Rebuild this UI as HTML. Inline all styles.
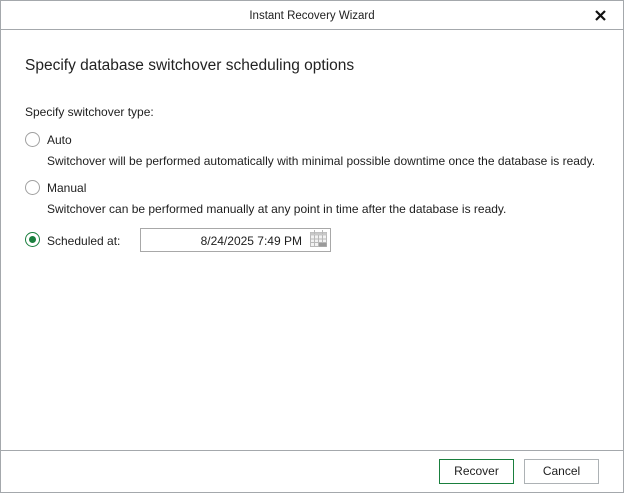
<!DOCTYPE html>
<html><head><meta charset="utf-8"><style>
*{margin:0;padding:0;box-sizing:border-box}
body{width:624px;height:493px;background:#fff;font-family:"Liberation Sans",sans-serif;color:#1e1e1e;position:relative;overflow:hidden}
.frame{position:absolute;left:0;top:0;width:624px;height:493px;border:1px solid #a4a8ac}
.abs{position:absolute;white-space:nowrap}
.line{position:absolute;left:0;width:624px;height:1px;background:#a4a8ac}
.radio{position:absolute;width:15px;height:15px;border:1px solid #a0a0a0;border-radius:50%;background:#fff}
.radio.on{border-color:#1a7f3e}
.radio.on::after{content:"";position:absolute;left:3px;top:3px;width:7px;height:7px;border-radius:50%;background:#1a7f3e}
.t{font-size:12px}
.btn{position:absolute;top:459px;height:25px;width:75px;border:1px solid #adb2b5;font-size:12px;text-align:center;line-height:23px;background:#fff}
</style></head><body>
<div class="frame"></div>
<div class="abs t" style="left:0;width:624px;text-align:center;top:10px;font-size:11.5px">Instant Recovery Wizard</div>
<svg class="abs" style="left:595px;top:10px" width="11" height="11" viewBox="0 0 11 11"><path d="M1 1L10 10M10 1L1 10" stroke="#111" stroke-width="2.2"/></svg>
<div class="line" style="top:29px"></div>
<div class="abs" style="left:25px;top:57px;font-size:15.5px;color:#222">Specify database switchover scheduling options</div>
<div class="abs t" style="left:25px;top:105px">Specify switchover type:</div>
<div class="radio" style="left:25px;top:132px"></div>
<div class="abs t" style="left:47px;top:133px">Auto</div>
<div class="abs t" style="left:47px;top:154px">Switchover will be performed automatically with minimal possible downtime once the database is ready.</div>
<div class="radio" style="left:25px;top:180px"></div>
<div class="abs t" style="left:47px;top:181px">Manual</div>
<div class="abs t" style="left:47px;top:202px">Switchover can be performed manually at any point in time after the database is ready.</div>
<div class="radio on" style="left:25px;top:232px"></div>
<div class="abs t" style="left:47px;top:234px">Scheduled at:</div>
<div class="abs" style="left:140px;top:228px;width:191px;height:24px;border:1px solid #a8a8a8"></div>
<div class="abs t" style="left:140px;width:162px;text-align:right;top:234px">8/24/2025 7:49 PM</div>
<svg class="abs" style="left:310px;top:230px" width="17" height="17" viewBox="0 0 17 17"><rect x="0.5" y="2.5" width="16" height="14" fill="#f2f2f2" stroke="#b8b8b8"/><rect x="0.5" y="2.5" width="16" height="3" fill="#c8c8c8"/><path d="M4.5 0v4M12.5 0v4M0.5 9h16M0.5 12.5h16M4.5 5v11M8.5 5v11M12.5 5v11" stroke="#b8b8b8"/><rect x="9" y="13" width="7.5" height="3.5" fill="#9a9a9a"/></svg>
<div class="line" style="top:450px"></div>
<div class="btn" style="left:439px;border-color:#1a7f3e">Recover</div>
<div class="btn" style="left:524px">Cancel</div>
</body></html>
